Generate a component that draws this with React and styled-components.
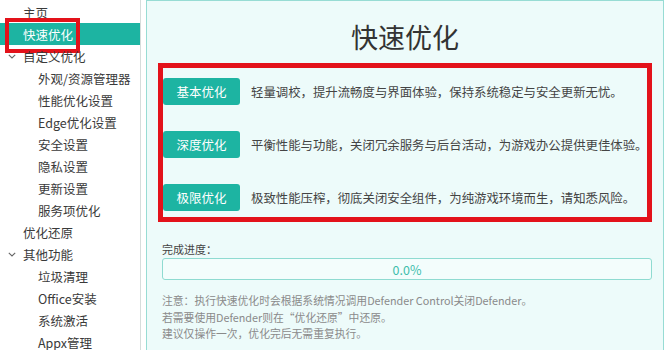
import React from 'react'
import styled, { createGlobalStyle } from 'styled-components'

const GlobalStyle = createGlobalStyle`
  html, body {
    margin: 0;
    padding: 0;
    background: #ffffff;
    overflow: hidden;
  }
  body {
    font-family: "Noto Sans CJK SC", "Noto Sans", sans-serif;
  }
`

const TEAL = '#1db4a2'

const Shell = styled.div`
  display: flex;
  gap: 5px;
  width: 667px;
  height: 350px;
  overflow: hidden;
`

const Sidebar = styled.nav`
  width: 140px;
  flex-shrink: 0;
  padding-top: 1px;
  background: #fff;
  border-right: 1px solid #d6dddc;
`

const NavItem = styled.div`
  position: relative;
  display: flex;
  align-items: center;
  height: 22px;
  padding-left: ${p => p.$indent}px;
  font-size: 12.5px;
  color: ${p => (p.$active ? '#fff' : '#3a3a3a')};
  background: ${p => (p.$active ? TEAL : 'transparent')};
  white-space: nowrap;
`

const Caret = styled.span`
  display: inline-flex;
  width: 15px;
  margin-left: -15px;
  align-items: center;
`

const Highlight = styled.span`
  position: absolute;
  left: 5px;
  top: -5px;
  width: 75px;
  height: 35px;
  box-sizing: border-box;
  border: 4px solid #e3121a;
  pointer-events: none;
`

const Main = styled.main`
  flex: 1;
  min-width: 0;
  margin-right: 3px;
  padding: 0 11px 0 11px;
  background: #edfbfa;
  border: 1px solid #97dcd4;
  border-bottom: none;
`

const Title = styled.h1`
  margin: 0;
  height: 62px;
  padding-top: 8px;
  box-sizing: border-box;
  display: flex;
  align-items: center;
  justify-content: center;
  font-size: 27px;
  font-weight: 400;
  color: #333;
`

const ModeBox = styled.div`
  display: flex;
  flex-direction: column;
  gap: 26px;
  padding: 10px 0 6px 0;
  border: 5px solid #e3121a;
`

const ModeRow = styled.div`
  display: flex;
  align-items: center;
  gap: 11px;
`

const ModeButton = styled.button`
  width: 77px;
  height: 27px;
  flex-shrink: 0;
  border: none;
  border-radius: 3px;
  background: ${TEAL};
  color: #fff;
  font-family: inherit;
  font-size: 12.5px;
  padding: 0;
`

const ModeDesc = styled.span`
  font-size: 12.4px;
  color: #444;
  white-space: nowrap;
`

const ProgressLabel = styled.div`
  margin-top: 20px;
  font-size: 11px;
  line-height: 14px;
  color: #444;
  padding-left: 4px;
`

const ProgressBar = styled.div`
  margin: 2px 0 0 4px;
  height: 22px;
  box-sizing: border-box;
  display: flex;
  align-items: center;
  justify-content: center;
  border: 1px solid #8fdbd1;
  border-radius: 3px;
  background: #f3fdfc;
  color: #3fbdac;
  font-size: 12.5px;
`

const Notes = styled.p`
  margin: 12px 0 0 4px;
  font-size: 10.8px;
  line-height: 16.5px;
  color: #8a8a8a;
`

const Chevron = () => (
  <svg width="8" height="5" viewBox="0 0 8 5">
    <path d="M0.8 0.8 L4 4 L7.2 0.8" fill="none" stroke="#666" strokeWidth="1.1" />
  </svg>
)

const navItems = [
  { label: '主页', level: 0 },
  { label: '快速优化', level: 0, active: true },
  { label: '自定义优化', level: 0, caret: true },
  { label: '外观/资源管理器', level: 1 },
  { label: '性能优化设置', level: 1 },
  { label: 'Edge优化设置', level: 1 },
  { label: '安全设置', level: 1 },
  { label: '隐私设置', level: 1 },
  { label: '更新设置', level: 1 },
  { label: '服务项优化', level: 1 },
  { label: '优化还原', level: 0 },
  { label: '其他功能', level: 0, caret: true },
  { label: '垃圾清理', level: 1 },
  { label: 'Office安装', level: 1 },
  { label: '系统激活', level: 1 },
  { label: 'Appx管理', level: 1 },
]

const modes = [
  { name: '基本优化', desc: '轻量调校，提升流畅度与界面体验，保持系统稳定与安全更新无忧。' },
  { name: '深度优化', desc: '平衡性能与功能，关闭冗余服务与后台活动，为游戏办公提供更佳体验。' },
  { name: '极限优化', desc: '极致性能压榨，彻底关闭安全组件，为纯游戏环境而生，请知悉风险。' },
]

const App = () => {
  return (
    <Shell>
      <GlobalStyle />
      <Sidebar>
        {navItems.map(item => (
          <NavItem key={item.label} $indent={item.level ? 38 : 23} $active={item.active}>
            {item.caret && (
              <Caret>
                <Chevron />
              </Caret>
            )}
            {item.label}
            {item.active && <Highlight />}
          </NavItem>
        ))}
      </Sidebar>
      <Main>
        <Title>快速优化</Title>
        <ModeBox>
          {modes.map(m => (
            <ModeRow key={m.name}>
              <ModeButton>{m.name}</ModeButton>
              <ModeDesc>{m.desc}</ModeDesc>
            </ModeRow>
          ))}
        </ModeBox>
        <ProgressLabel>完成进度：</ProgressLabel>
        <ProgressBar>0.0%</ProgressBar>
        <Notes>
          注意：执行快速优化时会根据系统情况调用Defender Control关闭Defender。
          <br />
          若需要使用Defender则在“优化还原”中还原。
          <br />
          建议仅操作一次，优化完后无需重复执行。
        </Notes>
      </Main>
    </Shell>
  )
}

export default App
